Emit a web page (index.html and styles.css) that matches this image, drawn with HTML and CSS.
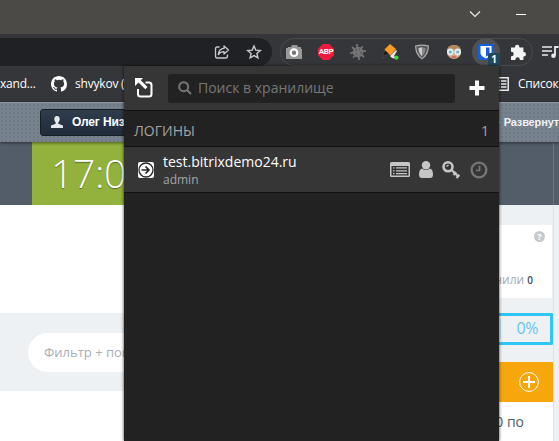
FILE: index.html
```html
<!DOCTYPE html>
<html lang="ru">
<head>
<meta charset="utf-8">
<title>Bitrix24</title>
<link rel="stylesheet" href="styles.css">
</head>
<body>
<div class="window">
  <header class="titlebar">
    <svg width="12" height="8" viewBox="0 0 12 8"><path d="M1 1.5l5 5 5-5" fill="none" stroke="#eee" stroke-width="1.1"/></svg>
    <span class="minimize"></span>
  </header>
  <div class="toolbar">
    <div class="omnibox">
      <svg width="16" height="16" viewBox="0 0 16 16" fill="none" stroke="#c6c8ca" stroke-width="1.3"><path d="M5.500 3H3.200Q1.500 3 1.500 5v7Q1.500 14 3.300 14h8.400q1.800 0 1.800-2v-1.500"/><path d="M10 2l4.500 4-4.500 4V7.700Q6.500 7.500 4.300 10.500 5 4.700 10 4.400z" stroke-linejoin="round"/></svg>
      <svg width="16" height="16" viewBox="0 0 16 16"><path d="M8 2l1.800 4.100 4.500.4-3.400 3 1 4.400L8 11.600l-3.900 2.300 1-4.400-3.400-3 4.500-.4z" fill="none" stroke="#c6c8ca" stroke-width="1.400"/></svg>
    </div>
    <div class="extensions">
      <span class="slot"><svg width="16" height="16" viewBox="0 0 16 16"><path d="M2 3h3l1-2h5l1 2h3v2h1v10H0V4h2z" fill="#999"/><circle cx="8" cy="8.700" r="3.300" fill="#777" stroke="#fff" stroke-width="2.200"/></svg></span>
      <span class="slot"><span class="abp">ABP</span></span>
      <span class="slot"><svg width="16" height="16" viewBox="0 0 16 16"><circle cx="8" cy="8" r="5.300" fill="#737373"/><g stroke="#737373" stroke-width="1.800"><path d="M6.800 0l2.400 16M0 9.200l16-2.400M2 3l12 10M3.200 13.800l9.600-11.600"/></g><path d="M5 6h2M9 5h1M6 10h1M10 9h2" stroke="#4b4b4d"/></svg></span>
      <span class="slot"><svg width="18" height="16" viewBox="0 0 18 16"><path d="M1 15L4 6l5 4-5 1z" fill="#151515" stroke="#555" stroke-width=".6"/><path d="M3.500 5.500L9 0l6 5-5.500 6.500z" fill="#ff9b25"/><path d="M9 12l6-6 1 1-3 5 3 3-5-1z" fill="#e8e8e8"/><circle cx="15.500" cy="13.700" r="2.100" fill="#38da35"/></svg></span>
      <span class="slot"><svg width="16" height="16" viewBox="0 0 16 16"><path d="M1 1.500Q8-.5 15 1.500 15 11 8 15.500 1 11 1 1.500z" fill="#aaa"/><path d="M2.200 2.500Q8 1.200 13.800 2.500 13.200 10 8 14 2.800 10 2.200 2.500z" fill="#55565a"/><path d="M4.500 4L8 3.200v9Q4.500 9 4.500 4z" fill="#ccc"/><path d="M8 3.200l3.500.8q0 5-3.500 8.200z" fill="#888"/></svg></span>
      <span class="slot"><svg width="16" height="16" viewBox="0 0 16 16"><circle cx="8" cy="8" r="7" fill="#d99d7d"/><path d="M1 7Q1 1 8 1t7 6z" fill="#b08a5e"/><circle cx="4.300" cy="8" r="2.500" fill="#7fb0b8" stroke="#dceff2" stroke-width="1.800"/><circle cx="11.700" cy="8" r="2.500" fill="#7fb0b8" stroke="#dceff2" stroke-width="1.800"/><path d="M6 13h4" stroke="#a05245"/></svg></span>
      <span class="slot active"><svg width="16" height="16" viewBox="0 0 16 16"><rect width="16" height="16" rx="2" fill="#175ddc"/><path d="M2.500 2h11v7q0 3-5.500 5.500Q2.500 12 2.500 9z" fill="#fff"/><path d="M8 3.500h3.500V9q0 2-3.500 3.700z" fill="#175ddc"/></svg><b class="badge">1</b></span>
      <span class="slot"><svg width="16" height="16" viewBox="0 0 16 16"><path d="M1 3.500h4V3a2.200 2.200 0 0 1 4.400 0v.5h4V8h.4a2.200 2.200 0 0 1 0 4.400h-.4V16H9.800v-.6a2.200 2.200 0 0 0-4.400 0v.6H1v-3.800h.5a2.200 2.200 0 0 0 0-4.400H1z" fill="#f1f3f4"/></svg></span>
    </div>
    <svg class="playlist" width="17" height="14" viewBox="0 0 17 14"><path d="M0 2h10M0 6h10M0 10h6" stroke="#e8eaed" stroke-width="1.600"/><path d="M16.500 2H13v8.500" fill="none" stroke="#e8eaed" stroke-width="1.800"/><circle cx="11.500" cy="10.700" r="2.300" fill="#e8eaed"/></svg>
  </div>
  <nav class="bookmarks">
    <span class="bm-first">xand...</span>
    <svg width="16" height="16" viewBox="0 0 16 16"><path fill="#fff" d="M8 0C3.580 0 0 3.580 0 8c0 3.540 2.290 6.530 5.470 7.590.4.070.55-.17.55-.38 0-.19-.01-.82-.01-1.490-2.010.37-2.530-.49-2.690-.94-.09-.23-.48-.94-.82-1.130-.28-.15-.68-.52-.01-.53.63-.01 1.080.58 1.230.82.72 1.210 1.870.87 2.330.66.070-.52.28-.87.51-1.070-1.780-.2-3.640-.89-3.640-3.950 0-.87.31-1.590.82-2.150-.08-.2-.36-1.020.08-2.120 0 0 .67-.21 2.200.82a7.600 7.600 0 0 1 4 0c1.530-1.040 2.200-.82 2.200-.82.44 1.100.16 1.920.08 2.120.51.56.82 1.270.82 2.150 0 3.070-1.870 3.750-3.650 3.950.29.25.54.73.54 1.480 0 1.070-.01 1.930-.01 2.200 0 .21.15.46.55.38A8 8 0 0 0 16 8c0-4.420-3.580-8-8-8z"/></svg>
    <span class="bm-second">shvykov (</span>
    <div class="bm-right">
      <svg width="14" height="14" viewBox="0 0 14 14"><path d="M.8.8h12.400v12.400H.8z" fill="none" stroke="#e8eaed" stroke-width="1.500"/><path d="M3 4h1.500M3 7h1.500M3 10h1.500M6 4h5.500M6 7h5.500M6 10h5.500" stroke="#e8eaed" stroke-width="1.500"/></svg>
      <span>Список</span>
    </div>
  </nav>
  <div class="portal-bar">
    <div class="user"><svg width="12" height="12" viewBox="0 0 12 12"><path d="M6 0q3 0 2.700 3.500Q8.500 5.500 7.300 6.500v1.200L12 9.500V12H0V9.500l4.700-1.800V6.500Q3.500 5.500 3.300 3.500 3 0 6 0z" fill="#e3e8ec"/></svg><span>Олег Низ</span></div>
    <div class="expand"><span class="dash"></span>Развернут</div>
  </div>
  <div class="page">
    <main class="main">
      <div class="clock-row"><div class="clock">17:0</div></div>
      <div class="blank"></div>
      <div class="filter-row"><div class="filter">Фильтр + пои</div></div>
    </main>
    <aside class="side">
      <div class="side-top"></div>
      <div class="card"><span class="help">?</span><div class="count">нили <b>0</b></div></div>
      <div class="progress"><span>0%</span></div>
      <div class="add"><svg width="20" height="20" viewBox="0 0 20 20" fill="none" stroke="#fff"><circle cx="10" cy="10" r="9.400"/><path d="M10 4v12M4 10h12" stroke-width="2"/></svg></div>
      <div class="note">0 по</div>
    </aside>
    <div class="edge"><div class="edge-top"></div></div>
  </div>
  <section class="vault">
    <div class="search-row">
      <svg class="popout" width="18" height="20" viewBox="0 0 18 20"><path d="M10.500 4.500H14q2.500 0 2.500 2.500V16q0 2.500-2.500 2.500H5.500Q3 18.500 3 16v-5" fill="none" stroke="#fff" stroke-width="2"/><path d="M0 0h8L5.800 2.300 12.500 9l-2.200 2.200L3.500 4.600 0 8z" fill="#fff"/></svg>
      <div class="search"><svg width="14" height="14" viewBox="0 0 14 14" fill="none" stroke="#777" stroke-width="2"><circle cx="5.700" cy="5.700" r="4.500"/><path d="M9 9l4 4"/></svg><span>Поиск в хранилище</span></div>
      <svg class="plus" width="16" height="16" viewBox="0 0 16 16"><path d="M8 .5v15M.5 8h15" stroke="#fff" stroke-width="4"/></svg>
    </div>
    <div class="heading"><span>ЛОГИНЫ</span><span>1</span></div>
    <div class="login">
      <svg width="16" height="16" viewBox="0 0 16 16"><rect width="16" height="16" rx="2" fill="#fff"/><circle cx="8" cy="8" r="7" fill="#fff" stroke="#252525" stroke-width="1.300"/><path d="M3.500 8h7.500M7.500 4.500L11 8l-3.500 3.500" fill="none" stroke="#252525" stroke-width="1.700"/></svg>
      <div class="names"><div class="host">test.bitrixdemo24.ru</div><div class="login-name">admin</div></div>
      <div class="actions">
        <svg width="20" height="16" viewBox="0 0 20 16"><path d="M1.500 0h17Q20 0 20 1.500v12q0 1.500-1.500 1.500h-17Q0 15 0 13.500v-12Q0 0 1.500 0z" fill="#c6c6c6"/><path d="M1.500 4h17v9.500h-17z" fill="#333"/><path d="M3 5.800h1.500M6 5.800h11M3 8.800h1.500M6 8.800h11M3 11.600h1.500M6 11.600h11" stroke="#c6c6c6" stroke-width="1.300"/></svg>
        <svg width="14" height="17" viewBox="0 0 14 17"><circle cx="7" cy="4.300" r="4.200" fill="#c6c6c6"/><path d="M3 7.500q4 3 8 0 3 1 3 6 0 3.500-3 3.500H3q-3 0-3-3.500 0-5 3-6z" fill="#c6c6c6"/></svg>
        <svg width="19" height="18" viewBox="0 0 19 18" fill="none" stroke="#c6c6c6"><circle cx="6" cy="5.800" r="4.500" stroke-width="2.600"/><path d="M9 8.500l8 7.500M11.500 14l2.500-3M14.500 17l2.700-3.300" stroke-width="2.300"/><path d="M4.500 5.500l2-1.500" stroke-width="1.500"/></svg>
        <svg width="18" height="18" viewBox="0 0 18 18" fill="none" stroke="#777"><circle cx="9" cy="9" r="7.400" stroke-width="2.300"/><path d="M9.500 4.500v5H6" stroke-width="1.700"/></svg>
      </div>
    </div>
  </section>
</div>
</body>
</html>
```

FILE: styles.css
```css
* { box-sizing: border-box; }
body { margin: 0; }
svg { display: block; flex: none; }
.window { position: relative; width: 559px; height: 441px; overflow: hidden; display: flex; flex-direction: column; background: #fff; font-family: "Open Sans", sans-serif; }
.titlebar { flex: none; height: 34px; background: #4c4a47; display: flex; align-items: center; justify-content: flex-end; gap: 35px; padding: 0 33px 6px 0; }
.minimize { width: 10px; height: 1px; background: #fff; }
.toolbar { flex: none; height: 32px; background: #35363a; display: flex; padding-top: 4px; }
.omnibox { width: 272px; height: 28px; border-radius: 0 14px 14px 0; background: #202124; display: flex; align-items: center; justify-content: flex-end; gap: 16px; padding-right: 10px; }
.extensions { width: 253px; height: 28px; margin-left: 8px; border: 1px solid #4a4b4f; border-radius: 14px; display: flex; align-items: center; }
.slot { flex: none; width: 28px; height: 28px; margin: 0 2px; display: flex; align-items: center; justify-content: center; }
.slot:first-child { margin-left: -1px; }
.active { position: relative; border-radius: 50%; background: #505155; }
.badge { position: absolute; right: 0; bottom: 0; width: 12px; height: 13px; border-radius: 2px; background: #20495c; color: #fff; font: bold 10px/13px "Open Sans", sans-serif; text-align: center; }
.abp { display: flex; justify-content: center; width: 16px; height: 16px; background: #ec1c3e; color: #fff; clip-path: polygon(30% 0, 70% 0, 100% 30%, 100% 70%, 70% 100%, 30% 100%, 0 70%, 0 30%); font: bold 8px/16px "Roboto", sans-serif; letter-spacing: -.3px; }
.playlist { margin: 7px 0 0 9px; }
.bookmarks { flex: none; height: 36px; background: #35363a; color: #fff; font-size: 12px; line-height: 16px; display: flex; align-items: center; white-space: nowrap; letter-spacing: -.2px; }
.bm-first { width: 51px; }
.bm-second { margin-left: 8px; }
.bm-right { margin-left: auto; width: 64px; display: flex; align-items: center; gap: 9px; }
.portal-bar { flex: none; height: 40px; background: #77828e radial-gradient(circle, #6e7986 25%, transparent 35%) 0 0 / 4px 4px; border-top: 1px solid #8e98a2; box-shadow: 0 1px 3px rgba(0,0,0,.5); z-index: 1; display: flex; justify-content: space-between; align-items: center; padding-bottom: 1px; font: bold 12px "Liberation Sans", sans-serif; color: #fff; }
.user { width: 150px; height: 27px; margin: 0 0 0 40px; border: 1px solid #171d24; border-radius: 3px; background: linear-gradient(#303d4d, #202b3b); display: flex; align-items: center; gap: 10px; padding-left: 10px; white-space: nowrap; letter-spacing: -.15px; }
.user span { margin-left: -1px; }
.expand { width: 61px; display: flex; align-items: center; white-space: nowrap; font-size: 11px; letter-spacing: -.15px; color: #f0f2f4; }
.dash { width: 3px; height: 1px; margin-right: 4px; background: #b4bcc4; }
.page { flex: 1; display: flex; }
.main { width: 450px; }
.clock-row { height: 63px; background: #535c69; padding-left: 32px; }
.clock { height: 63px; padding-left: 19px; background: #92b23d; color: #fff; font-size: 39px; font-weight: 300; line-height: 61px; letter-spacing: -.3px; text-shadow: 0 1px 1px rgba(0,0,0,.4); }
.blank { height: 108px; }
.filter-row { height: 78px; background: #edf1f4; padding: 20px 0 19px 28px; }
.filter { height: 39px; border-radius: 20px 0 0 20px; background: #fff; padding-left: 16px; color: #a8afb8; font-size: 13px; line-height: 38px; }
.side { width: 103px; background: #edf1f4; display: flex; flex-direction: column; }
.side-top { height: 63px; background: #535c69; }
.card { height: 73px; margin: 20px 1px 0 0; background: #fff; display: flex; flex-direction: column; align-items: flex-end; }
.help { width: 11px; height: 11px; margin: 6px 7px 0 0; border-radius: 50%; background: #c5c9ce; color: #fff; font: bold 9px/11px "Open Sans", sans-serif; text-align: center; }
.count { margin: 31px 19px 0 0; font-size: 12px; line-height: 14px; color: #a2a9b1; }
.count b { font-size: 10px; color: #424956; font-weight: 600; }
.progress { height: 32px; margin-top: 15px; border: 3px solid #2fc6f6; border-radius: 1px; display: flex; justify-content: flex-end; align-items: center; color: #67c5ed; font-size: 16px; line-height: 24px; }
.progress span { border-left: 1px solid #bfdce9; padding: 0 12px 0 15px; height: 20px; line-height: 18px; letter-spacing: -.4px; }
.add { height: 40px; margin-top: 17px; background: #f7a70b; display: flex; justify-content: flex-end; align-items: center; padding-right: 14px; }
.note { flex: 1; background: #fff; text-align: right; padding: 10px 29px 0 0; font-size: 14px; line-height: 20px; color: #535c69; }
.edge { width: 6px; background: #edf1f4; border-left: 1px solid #dfe3e7; }
.edge-top { height: 63px; margin-left: -1px; background: #535c69; border-left: 1px solid #6d7580; }
.vault { position: absolute; left: 124px; top: 66px; width: 375px; height: 375px; z-index: 2; background: #222; box-shadow: 0 0 3px rgba(0,0,0,.8); color: #a4a4a4; }
.search-row { height: 44px; background: #363636; display: flex; align-items: center; padding: 0 14px 0 11px; }
.search { width: 287px; height: 29px; margin: 0 14px 0 15px; border-radius: 3px; background: #222; color: #777; display: flex; align-items: center; gap: 6px; padding-left: 10px; font-size: 14px; line-height: 20px; }
.heading { height: 37px; border-top: 1px solid #111; border-bottom: 1px solid #111; display: flex; justify-content: space-between; align-items: center; padding: 4px 10px 0; font-size: 14px; line-height: 20px; }
.login { height: 46px; background: #363636; border-bottom: 1px solid #111; display: flex; align-items: center; padding: 0 11px 0 14px; }
.names { margin-left: 9px; }
.host { color: #fff; font-size: 14px; line-height: 20px; }
.login-name { font-size: 12px; line-height: 16px; }
.actions { margin-left: auto; display: flex; align-items: center; gap: 9px; }
```
